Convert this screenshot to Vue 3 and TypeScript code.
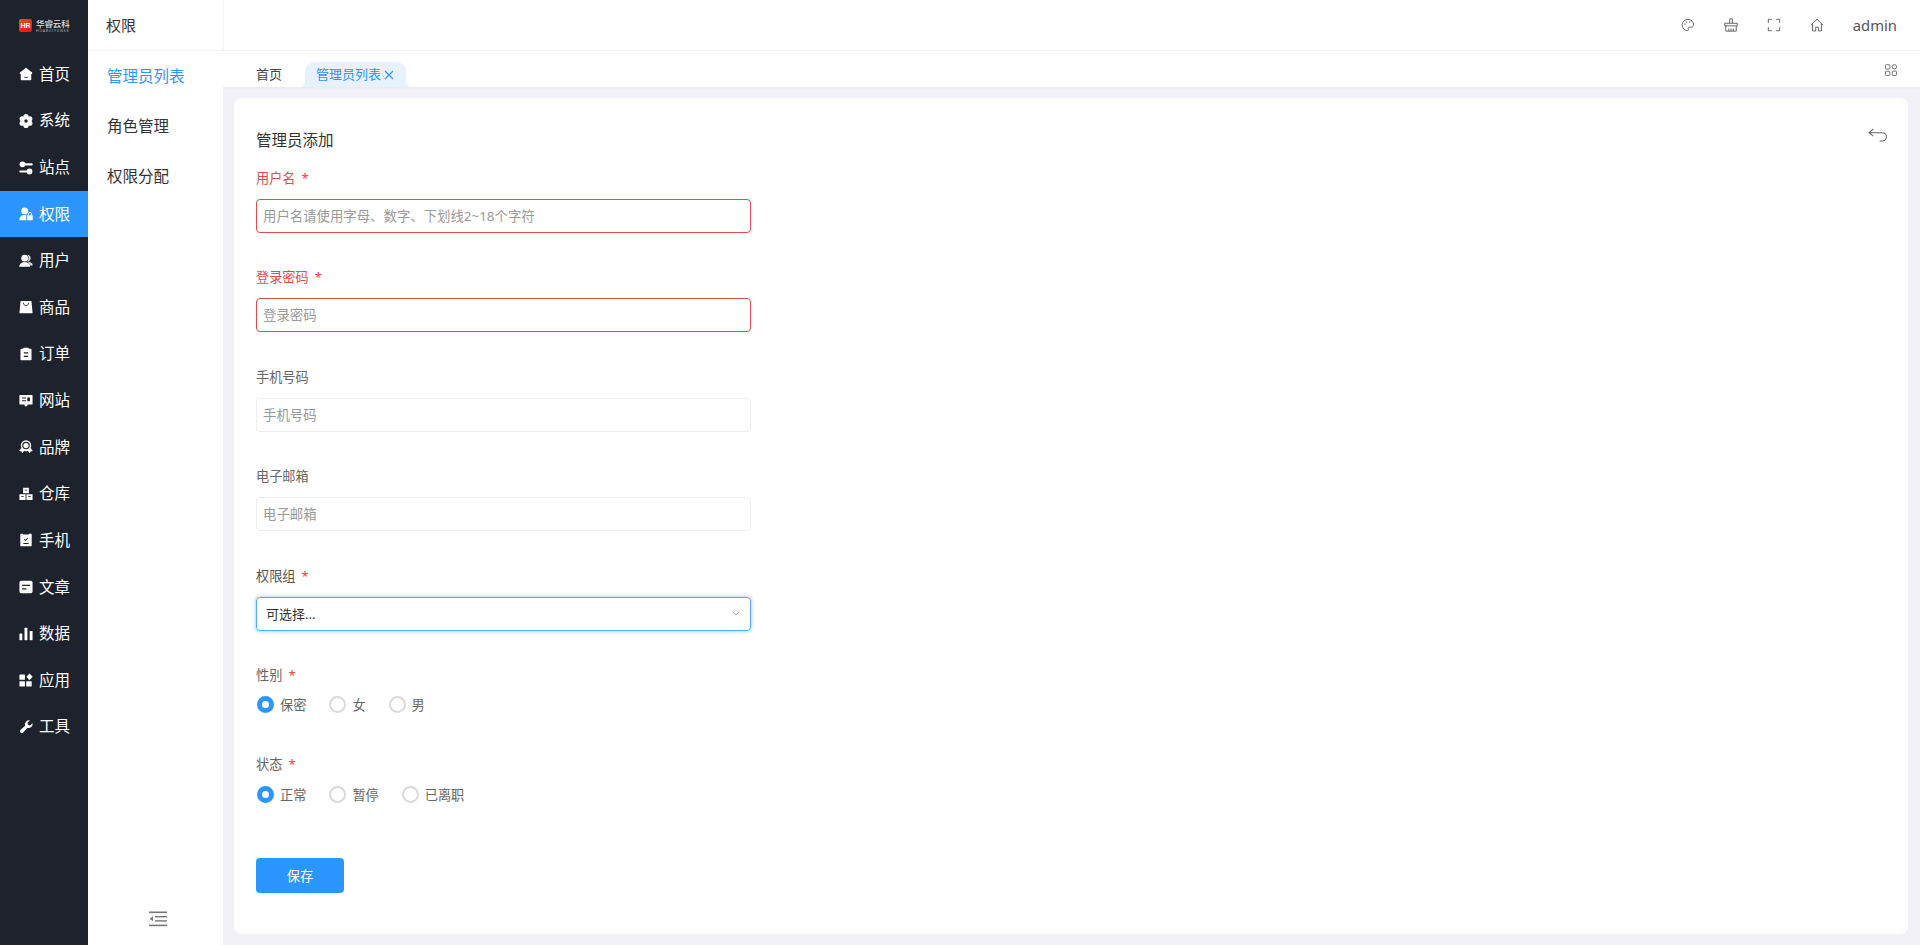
<template>
  <div class="app">
    <aside class="rail">
      <div class="brand">
        <span class="mark">HR</span>
        <span class="brand-text"><b>华睿云科</b><i>HUARUIYUNKE</i></span>
      </div>
      <nav>
        <a v-for="m in menu" :key="m.name" class="rail-item" :class="{ on: m.name === '权限' }">
          <svg class="rail-icon" viewBox="0 0 16 16" fill="#fff" v-html="m.icon"></svg>
          <span>{{ m.name }}</span>
        </a>
      </nav>
    </aside>

    <aside class="sub">
      <div class="sub-title">权限</div>
      <a class="sub-item active">管理员列表</a>
      <a class="sub-item">角色管理</a>
      <a class="sub-item">权限分配</a>
      <div class="collapse">
        <svg width="18" height="16" viewBox="0 0 18 16" fill="#777">
          <rect x="0" y="0.5" width="18" height="1.6" />
          <rect x="6" y="5" width="12" height="1.4" />
          <rect x="6" y="9.2" width="12" height="1.4" />
          <rect x="0" y="13.6" width="18" height="1.6" />
          <path d="M4 5.2v5l-3.4-2.5z" />
        </svg>
      </div>
    </aside>

    <main class="main">
      <header class="top">
        <svg class="tool" viewBox="0 0 16 16"><path d="M8 1.600a6.400 6.400 0 1 0-.6 12.800c1.400 0 1.500-1 1.100-1.800-.5-1 0-2.100 1.200-2.100h2.200c1.500 0 2.500-1 2.500-2.700C14.400 4.300 11.600 1.600 8 1.600z" /><circle cx="4.600" cy="7" r=".7" class="dot" /><circle cx="6.500" cy="4.500" r=".7" class="dot" /><circle cx="10" cy="4.500" r=".7" class="dot" /></svg>
        <svg class="tool" viewBox="0 0 16 16"><path d="M6.500 6V1h3v5M.8 6h14.400v3H.8zM2 9v6h12V9M5.500 12v3M8 12v3M10.500 12v3" /></svg>
        <svg class="tool" viewBox="0 0 16 16"><path d="M1.500 5.500v-4h4M10.500 1.500h4v4M14.500 10.500v4h-4M5.500 14.500h-4v-4" /></svg>
        <svg class="tool" viewBox="0 0 16 16"><path d="M1 8.200 8 1.400l7 6.800M3 6.500v8.300h3.500v-4.300h3v4.300H13V6.500" /></svg>
        <span class="admin">admin</span>
      </header>

      <div class="tabs">
        <a class="tab">首页</a>
        <a class="tab current">管理员列表<svg width="10" height="10" viewBox="0 0 10 10"><path d="M1 1l8 8M9 1 1 9" /></svg></a>
        <svg class="apps" viewBox="0 0 12 12"><rect x=".5" y=".7" width="4.300" height="4.300" rx=".8" /><circle cx="9.400" cy="2.800" r="2.200" /><rect x=".5" y="7.200" width="4.300" height="4.300" rx=".8" /><rect x="7.200" y="7.200" width="4.300" height="4.300" rx=".8" /></svg>
      </div>

      <section class="body">
        <form class="card" @submit.prevent>
          <div class="head">
            <h1>管理员添加</h1>
            <svg class="back" viewBox="0 0 18 13"><path d="M5 .8 1 4.300l4 3.200M1 4.300h12.500a3.900 3.900 0 0 1 0 7.900H11" /></svg>
          </div>

          <div v-for="f in fields" :key="f.label" class="field" :class="{ bad: f.bad }">
            <label>{{ f.label }}<em v-if="f.req">*</em></label>
            <input :placeholder="f.hint" />
          </div>

          <div class="field">
            <label>权限组<em>*</em></label>
            <div class="select">可选择...
              <svg width="8" height="5" viewBox="0 0 8 5"><path d="M.7.7 4 4 7.300.7" /></svg>
            </div>
          </div>

          <div v-for="g in groups" :key="g.label" class="group">
            <label>{{ g.label }}<em>*</em></label>
            <div class="radios">
              <span v-for="(o, i) in g.options" :key="o" class="radio">
                <i :class="{ checked: i === 0 }"></i>{{ o }}
              </span>
            </div>
          </div>

          <button class="save" type="submit">保存</button>
        </form>
      </section>
    </main>
  </div>
</template>

<script setup lang="ts">
interface MenuItem { name: string; icon: string }

const D = '#1d222c'

const menu: MenuItem[] = [
  { name: '首页', icon: `<path d="M8 .8 1 6.300V8h1v6.500a.5.5 0 0 0 .5.5h11a.5.5 0 0 0 .5-.5V8h1V6.300z"/><path d="M6 11.500c1 .8 3 .8 4 0" stroke="${D}" fill="none"/>` },
  { name: '系统', icon: `<circle cx="8" cy="8" r="5.400"/><circle cx="8" cy="3" r="3"/><circle cx="8" cy="13" r="3"/><circle cx="3.700" cy="5.500" r="3"/><circle cx="12.300" cy="5.500" r="3"/><circle cx="3.700" cy="10.500" r="3"/><circle cx="12.300" cy="10.500" r="3"/><circle cx="8" cy="8" r="2" fill="${D}"/>` },
  { name: '站点', icon: `<circle cx="4" cy="3.800" r="3.300"/><rect x="4" y="2.700" width="11.700" height="2.300" rx="1.100"/><circle cx="12" cy="12" r="3.300"/><rect x=".3" y="10.900" width="11.700" height="2.300" rx="1.100"/>` },
  { name: '权限', icon: `<circle cx="6.500" cy="4.500" r="3.900"/><path d="M.3 15c0-3.800 2.500-6 5.700-6h2.300v6z"/><rect x="9.200" y="9.500" width="6.500" height="5.500" rx=".6"/><path d="M10.700 9.500V8a1.800 1.800 0 0 1 3.600 0v1.500" fill="none" stroke="#fff" stroke-width="1.100"/>` },
  { name: '用户', icon: `<path d="M9.500.8a3.800 3.800 0 0 1 3 6.200c-.6.700-1.500 1.300-2.500 1.500 3 .3 5.700 1.700 5.700 4.500H12c0-2-1-3.500-2.500-4.500 1-1 1.500-2 1.500-3.700 0-1.500-.5-3-1.500-4z" opacity=".85"/><circle cx="6.500" cy="4.800" r="3.900"/><path d="M.3 14.500c0-3.200 2.700-5 5.700-5h1c3 0 5.700 1.800 5.700 5z"/>` },
  { name: '商品', icon: `<path d="M1.800 1h12.400l1.300 13.500a.5.5 0 0 1-.5.5H1a.5.5 0 0 1-.5-.5z"/><path d="M5 3c0 4.500 6 4.500 6 0" fill="none" stroke="${D}"/>` },
  { name: '订单', icon: `<path fill-rule="evenodd" d="M2.500 2H5V.8h6V2h2.500a.8.8 0 0 1 .8.800v11.400a.8.8 0 0 1-.8.800h-11a.8.8 0 0 1-.8-.8V2.800a.8.8 0 0 1 .8-.8zM5.500 6v1.300h5V6zm0 4v1.300h5V10z"/>` },
  { name: '网站', icon: `<path fill-rule="evenodd" d="M1.200 1h13.600a.7.700 0 0 1 .7.700v9.600a.7.700 0 0 1-.7.700H10l-.8 2H6.800l-.8-2H1.200a.7.700 0 0 1-.7-.7V1.700a.7.700 0 0 1 .7-.7zM3.500 4v1.200h4.500V4zm0 3v1.200h4.500V7zm6-3v4.200h3V4z"/>` },
  { name: '品牌', icon: `<path fill-rule="evenodd" d="M8 .3a6 6 0 0 1 6 6c0 1-.3 2-.7 2.800l2.500 3.500-2.600.4-1 2.200-2-2.900L8 13l-2.200-.7-2 2.900-1-2.200-2.600-.4 2.500-3.500A6 6 0 0 1 2 6.300a6 6 0 0 1 6-6zm0 1.700a4.300 4.300 0 1 0 0 8.600A4.300 4.300 0 0 0 8 2z"/><circle cx="8" cy="6.300" r="3"/>` },
  { name: '仓库', icon: `<path fill-rule="evenodd" d="M4.700 .8h6.600v6.400H4.700zM6.500 3v1h3V3zM.5 8.200h7v6.600h-7zM2.500 10.500v1h3v-1zM8.500 8.200h7v6.600h-7zM10.500 10.500v1h3v-1z"/>` },
  { name: '手机', icon: `<path fill-rule="evenodd" d="M2 .8h2.500l.5 1h6l.5-1H14a.5.5 0 0 1 .5.500v13.400a.5.5 0 0 1-.5.500H2a.5.5 0 0 1-.5-.5V1.300A.5.5 0 0 1 2 .8zM5.500 7.500l2 2 3-3.500-.8-.6-2.300 2.600-1.200-1.100zM5 11.500v1h6v-1z"/>` },
  { name: '文章', icon: `<path fill-rule="evenodd" d="M2.500.8h11a2 2 0 0 1 2 2v10.400a2 2 0 0 1-2 2h-11a2 2 0 0 1-2-2V2.800a2 2 0 0 1 2-2zM3.500 5.500v1.400h9V5.500zm0 4v1.400h5V9.500z"/>` },
  { name: '数据', icon: `<rect x=".5" y="7.500" width="3.300" height="7.500" rx=".5"/><rect x="6.300" y=".8" width="3.300" height="14.200" rx=".5"/><rect x="12.200" y="4.500" width="3.300" height="10.500" rx=".5"/>` },
  { name: '应用', icon: `<rect x=".5" y="1.800" width="6.300" height="6" rx=".5"/><rect x=".5" y="9.300" width="6.300" height="6" rx=".5"/><rect x="8.200" y="9.300" width="6.300" height="6" rx=".5"/><path d="M12 .5l3.600 3.900L12 8.200 8.400 4.400z"/>` },
  { name: '工具', icon: `<path d="M15.500 3.800a4.700 4.700 0 0 1-6 5.200L4.700 14.300a2 2 0 0 1-3-.1 2 2 0 0 1 0-2.800L7 6.500a4.700 4.700 0 0 1 5.400-6L9.700 3.200l.6 2.300 2.300.7z"/>` },
]

interface Field { label: string; hint: string; req: boolean; bad: boolean }

const fields: Field[] = [
  { label: '用户名', hint: '用户名请使用字母、数字、下划线2~18个字符', req: true, bad: true },
  { label: '登录密码', hint: '登录密码', req: true, bad: true },
  { label: '手机号码', hint: '手机号码', req: false, bad: false },
  { label: '电子邮箱', hint: '电子邮箱', req: false, bad: false },
]

const groups = [
  { label: '性别', options: ['保密', '女', '男'] },
  { label: '状态', options: ['正常', '暂停', '已离职'] },
]
</script>

<style>
html, body { margin: 0; background: #f1f1f7; }
</style>

<style scoped>
.app {
  display: flex;
  height: 945px;
  overflow: hidden;
  font-family: "Noto Sans", "Noto Sans CJK SC", sans-serif;
  font-size: 14px;
  color: #333;
}
.rail { width: 88px; flex: none; background: #1d222c; color: #fff; }
.brand { height: 51px; display: flex; align-items: center; padding-left: 19px; gap: 4px; box-sizing: border-box; }
.mark {
  width: 13px; height: 13px; border-radius: 2px;
  background: linear-gradient(135deg, #f5501e, #e0101a);
  font: 700 7px/13px "Liberation Sans", sans-serif; color: #fff; text-align: center;
}
.brand-text { display: flex; flex-direction: column; color: #e2e2e2; }
.brand-text b { font-size: 8.500px; font-weight: 500; line-height: 9px; letter-spacing: -.1px; }
.brand-text i { font-size: 3.500px; font-style: normal; line-height: 5px; letter-spacing: .8px; color: #bbb; }
.rail-item { height: 46.62px; display: flex; align-items: center; padding-left: 19px; gap: 6px; box-sizing: border-box; color: #fff; font-size: 15.500px; }
.rail-item span { padding-bottom: 2px; }
.rail-item.on { background: #2b96fd; }
.rail-icon { width: 14px; height: 14px; flex: none; }

.sub { width: 135px; flex: none; background: #fff; display: flex; flex-direction: column; }
.sub-title { height: 51px; line-height: 50px; padding-left: 18px; border-bottom: 1px solid #f4f4f6; box-sizing: border-box; color: #333; font-size: 15px; }
.sub-item { height: 50.200px; line-height: 50px; padding-left: 19px; color: #333; font-size: 15.500px; }
.sub-item.active { color: #2b96fd; }
.collapse { margin-top: auto; height: 34px; display: flex; justify-content: center; align-items: flex-start; padding-left: 5px; }

.main { flex: 1; min-width: 0; display: flex; flex-direction: column; }
.top {
  height: 51px; flex: none; box-sizing: border-box; background: #fff;
  border-bottom: 1px solid #f4f4f6; border-left: 1px solid #f5f5f8;
  display: flex; align-items: center; justify-content: flex-end; padding-right: 23px;
}
.tool { width: 14px; height: 14px; margin-right: 29px; fill: none; stroke: #555; stroke-width: 1; }
.tool .dot { fill: #555; stroke: none; }
.admin { font-size: 14.800px; color: #555; }

.tabs {
  height: 36px; flex: none; background: #fff; display: flex; align-items: flex-end;
  padding-left: 33px; box-shadow: 0 1px 3px rgba(0, 0, 0, .04); position: relative;
}
.tab { height: 25px; line-height: 25px; font-size: 13px; color: #444; margin-right: 23px; }
.tab.current {
  position: relative; background: #e8f2ff; color: #2b96fd; border-radius: 9px 9px 0 0;
  padding: 0 10px 0 11px; width: 80px; display: flex; align-items: center; gap: 3px;
}
.tab.current svg { fill: none; stroke: #2b96fd; stroke-width: 1.100; flex: none; }
.tab.current::before, .tab.current::after { content: ""; position: absolute; bottom: 0; width: 7px; height: 7px; }
.tab.current::before { left: -7px; background: radial-gradient(circle at 0 0, #fff 7px, #e8f2ff 7.500px); }
.tab.current::after { right: -7px; background: radial-gradient(circle at 100% 0, #fff 7px, #e8f2ff 7.500px); }
.apps { position: absolute; right: 23px; top: 13px; width: 12px; height: 12px; fill: none; stroke: #666; stroke-width: .9; }

.body { flex: 1; min-height: 0; padding: 11px 12px 11px 11px; background: #f1f1f7; box-sizing: border-box; }
.card { height: 100%; box-sizing: border-box; background: #fff; border-radius: 8px; padding: 30px 21px 0 22px; }
.head { display: flex; justify-content: space-between; height: 40px; }
.head h1 { margin: 0; font-size: 15.500px; font-weight: 400; line-height: 24px; color: #333; }
.back { width: 19px; height: 14px; fill: none; stroke: #666; stroke-width: 1; }

.field { width: 495px; margin-bottom: 34.400px; }
.field label, .group label { display: block; height: 20px; line-height: 20px; font-size: 13.200px; color: #666; margin-bottom: 11px; }
em { color: #f03c3c; font-style: normal; margin-left: 6px; }
.field input {
  display: block; width: 100%; height: 34px; box-sizing: border-box; padding: 0 6px;
  border: 1px solid #eeeeee; border-radius: 4px; outline: none; background: #fff;
  font: 13.400px "Noto Sans", "Noto Sans CJK SC", sans-serif; color: #333;
}
.field input::placeholder { color: #999; opacity: 1; }
.bad label { color: #e04c4c; }
.bad input { border-color: #e04c4c; }
.field:has(.select) label { color: #555; }
.select {
  height: 34px; box-sizing: border-box; padding: 0 7px 0 9px; display: flex; align-items: center; justify-content: space-between;
  border: 1px solid #59a9f8; border-radius: 4px; box-shadow: 0 0 4px rgba(43, 150, 253, .55);
  font-size: 13px; color: #333;
}
.select svg { fill: none; stroke: #aaa; stroke-width: 1; margin-right: 3px; }

.group { margin-bottom: 39.300px; }
.group label { margin-bottom: 10px; }
.radios { display: flex; gap: 23px; height: 20px; align-items: center; padding-left: 1px; }
.radio { display: flex; align-items: center; gap: 6px; font-size: 13.200px; color: #666; }
.radio i { width: 17px; height: 17px; box-sizing: border-box; border: 2px solid #d9d9de; border-radius: 50%; background: #fff; }
.radio i.checked { border: 5px solid #2b96fd; }

.save {
  display: block; width: 88px; height: 35px; margin-top: 54px; border: 0; border-radius: 4px;
  background: #2b96fd; color: #fff; font: 13.200px "Noto Sans", "Noto Sans CJK SC", sans-serif;
}
</style>
